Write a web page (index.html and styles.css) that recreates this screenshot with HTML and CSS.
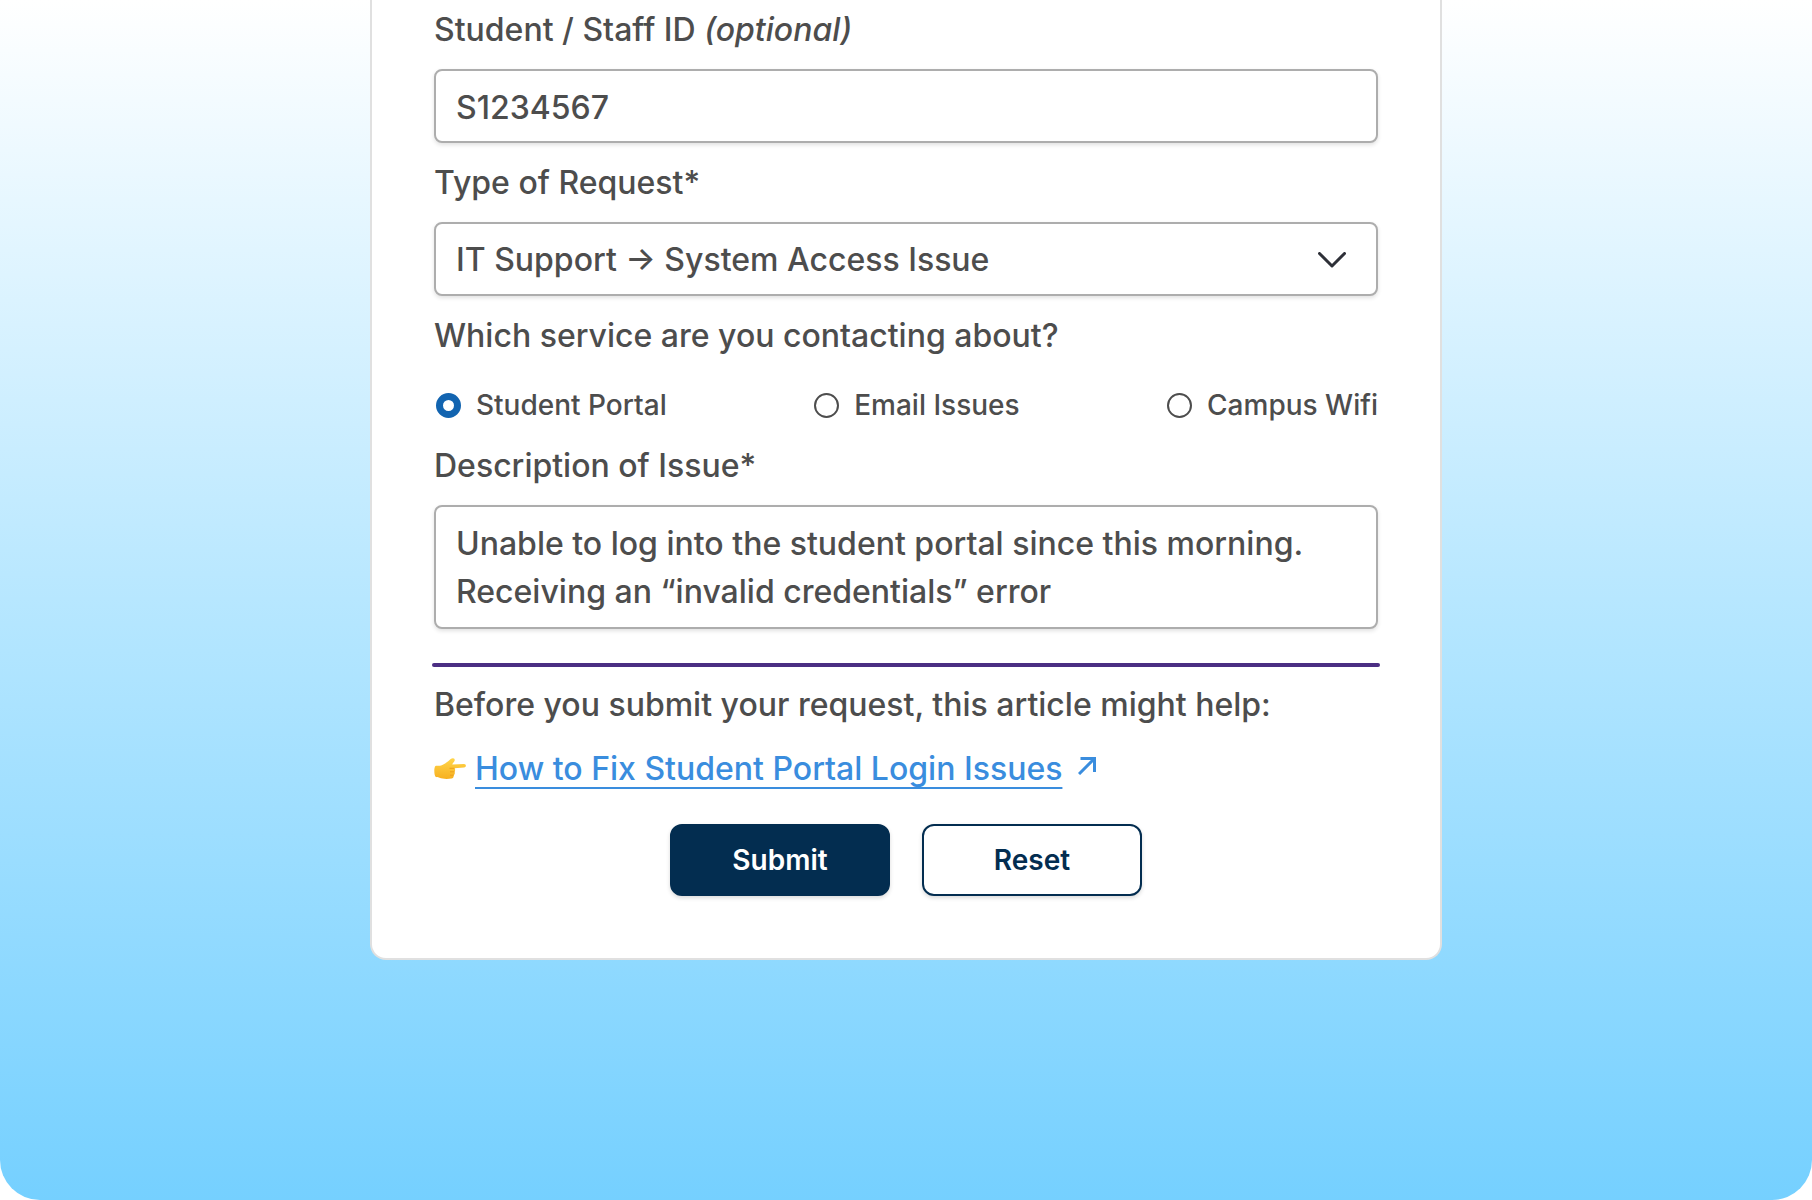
FILE: index.html
```html
<!DOCTYPE html>
<html lang="en">
<head>
  <meta charset="UTF-8" />
  <meta name="viewport" content="width=device-width, initial-scale=1.0" />
  <title>Support Request</title>
  <link rel="stylesheet" href="styles.css">
</head>
<body>
  <main class="page">
    <form class="card">
      <div class="field">
        <label for="staffId">Student / Staff ID <em>(optional)</em></label>
        <input class="control" type="text" id="staffId" value="S1234567">
      </div>

      <div class="field">
        <label for="requestType">Type of Request*</label>
        <div class="select-wrap">
          <select class="control" id="requestType">
            <option>IT Support → System Access Issue</option>
          </select>
          <svg class="chevron" viewBox="0 0 28 16" aria-hidden="true">
            <path d="M1.5 1.5 14 14 26.5 1.5" />
          </svg>
        </div>
      </div>

      <fieldset class="services">
        <legend>Which service are you contacting about?</legend>
        <div class="options">
          <label><input type="radio" name="service" checked>Student Portal</label>
          <label><input type="radio" name="service">Email Issues</label>
          <label><input type="radio" name="service">Campus Wifi</label>
        </div>
      </fieldset>

      <div class="field">
        <label for="description">Description of Issue*</label>
        <textarea class="control" id="description" rows="2">Unable to log into the student portal since this morning. Receiving an “invalid credentials” error</textarea>
      </div>

      <hr>

      <p class="hint">Before you submit your request, this article might help:</p>
      <p class="article">
        <svg class="hand" viewBox="0 0 32 24" aria-hidden="true">
          <defs>
            <linearGradient id="skin" x1="0" y1="0" x2="0" y2="1">
              <stop offset="0" stop-color="#ffd54a" />
              <stop offset="1" stop-color="#f7b020" />
            </linearGradient>
          </defs>
          <path fill="url(#skin)" d="M1 9.5C2 8.500 4 9 6 8.800C9 8 12 6 14.500 4C16 2.500 17.500 1.200 19 1.300C21 1.500 21.200 3.500 20 4.800C19 6 18.500 6.700 18.300 7.500L30 7C32.500 7 32.500 10.200 30 10.400L20.500 11.300C21.500 12.500 21.300 14 20.500 14.800C21.200 16 20.800 17.500 19.700 18.200C20 20 19 21.500 17.500 21.600C14 22 8.500 22.200 5.500 20.800C3.500 20 2.500 20.300 1.500 19.800C0 17 0 12 1 9.500Z" />
          <path class="crease" d="M20.500 11.300H15.500M20.500 14.800H16M19.700 18.200H16" />
        </svg>
        <a href="#">How to Fix Student Portal Login Issues</a>
        <svg class="arrow" viewBox="0 0 18 18" aria-hidden="true">
          <path d="M1 17 16.500 1.500M2.500 1.500H16.500V15" />
        </svg>
      </p>

      <div class="actions">
        <button class="btn primary" type="submit">Submit</button>
        <button class="btn" type="reset">Reset</button>
      </div>
    </form>
  </main>
</body>
</html>
```

FILE: styles.css
```css
* {
  box-sizing: border-box;
}

body {
  margin: 0;
  background-color: #fff;
  color: #4d4d4d;
  font-family: Inter, "Liberation Sans", sans-serif;
  font-size: 32px;
  font-weight: 500;
  line-height: 48px;
}

.page {
  min-height: 100vh;
  background: linear-gradient(#fff 0, #b4e6ff 52%, #75d0ff 100%);
  border-radius: 0 0 40px 40px;
}

.card {
  width: calc(100% - 40px);
  max-width: 1072px;
  margin: 0 auto;
  padding: 6px 62px 62px;
  background-color: #fff;
  border: 2px solid #e0e0e0;
  border-top: none;
  border-radius: 0 0 16px 16px;
}

.field > label,
legend {
  display: block;
  padding: 0;
  margin-bottom: 15px;
}

.field {
  margin-bottom: 16px;
}

.control {
  display: block;
  width: 100%;
  height: 74px;
  padding: 2px 20px 0;
  border: 2px solid #adadad;
  border-radius: 8px;
  background-color: #fff;
  color: inherit;
  font: inherit;
  box-shadow: 0 2px 4px rgba(0, 0, 0, 0.12);
}

textarea.control {
  height: 124px;
  padding: 13px 20px 0;
  resize: none;
  overflow: hidden;
}

.select-wrap {
  position: relative;
}

select.control {
  appearance: none;
}

.chevron {
  position: absolute;
  top: 30px;
  right: 32px;
  width: 28px;
  height: 16px;
  pointer-events: none;
}

.chevron path {
  fill: none;
  stroke: #2e3038;
  stroke-width: 3;
  stroke-linecap: round;
  stroke-linejoin: round;
}

.services {
  margin: 0 0 16px;
  padding: 0;
  border: none;
}

.options {
  display: flex;
  justify-content: space-between;
  padding-top: 9px;
  font-size: 28px;
  line-height: 42px;
}

.options label {
  display: flex;
  align-items: center;
  gap: 15px;
}

input[type="radio"] {
  appearance: none;
  width: 25px;
  height: 25px;
  margin: 0 0 0 2px;
  border: 2px solid #4d4d4d;
  border-radius: 50%;
}

input[type="radio"]:checked {
  border: 7px solid #1264b0;
}

hr {
  height: 4px;
  margin: 34px -2px 14px;
  border: none;
  border-radius: 2px;
  background-color: #4b2e83;
}

p {
  margin: 0;
}

.article {
  display: flex;
  align-items: center;
  margin: 16px 0 31px;
}

.hand {
  width: 32px;
  height: 24px;
  margin-right: 9px;
}

.crease {
  fill: none;
  stroke: #eda01c;
}

.article a {
  color: #3a8dde;
  text-decoration-thickness: 2px;
  text-underline-offset: 7px;
  text-decoration-skip-ink: none;
}

.arrow {
  width: 18px;
  height: 18px;
  margin: 0 0 6px 16px;
}

.arrow path {
  fill: none;
  stroke: #3a8dde;
  stroke-width: 3;
}

.actions {
  display: flex;
  justify-content: center;
  gap: 32px;
}

.btn {
  width: 220px;
  height: 72px;
  border: 2px solid #032d50;
  border-radius: 12px;
  background-color: #fff;
  color: #032d50;
  font: inherit;
  font-size: 28px;
  font-weight: 600;
  cursor: pointer;
  box-shadow: 0 2px 4px rgba(0, 0, 0, 0.15);
}

.btn.primary {
  background-color: #032d50;
  color: #fff;
}
```
